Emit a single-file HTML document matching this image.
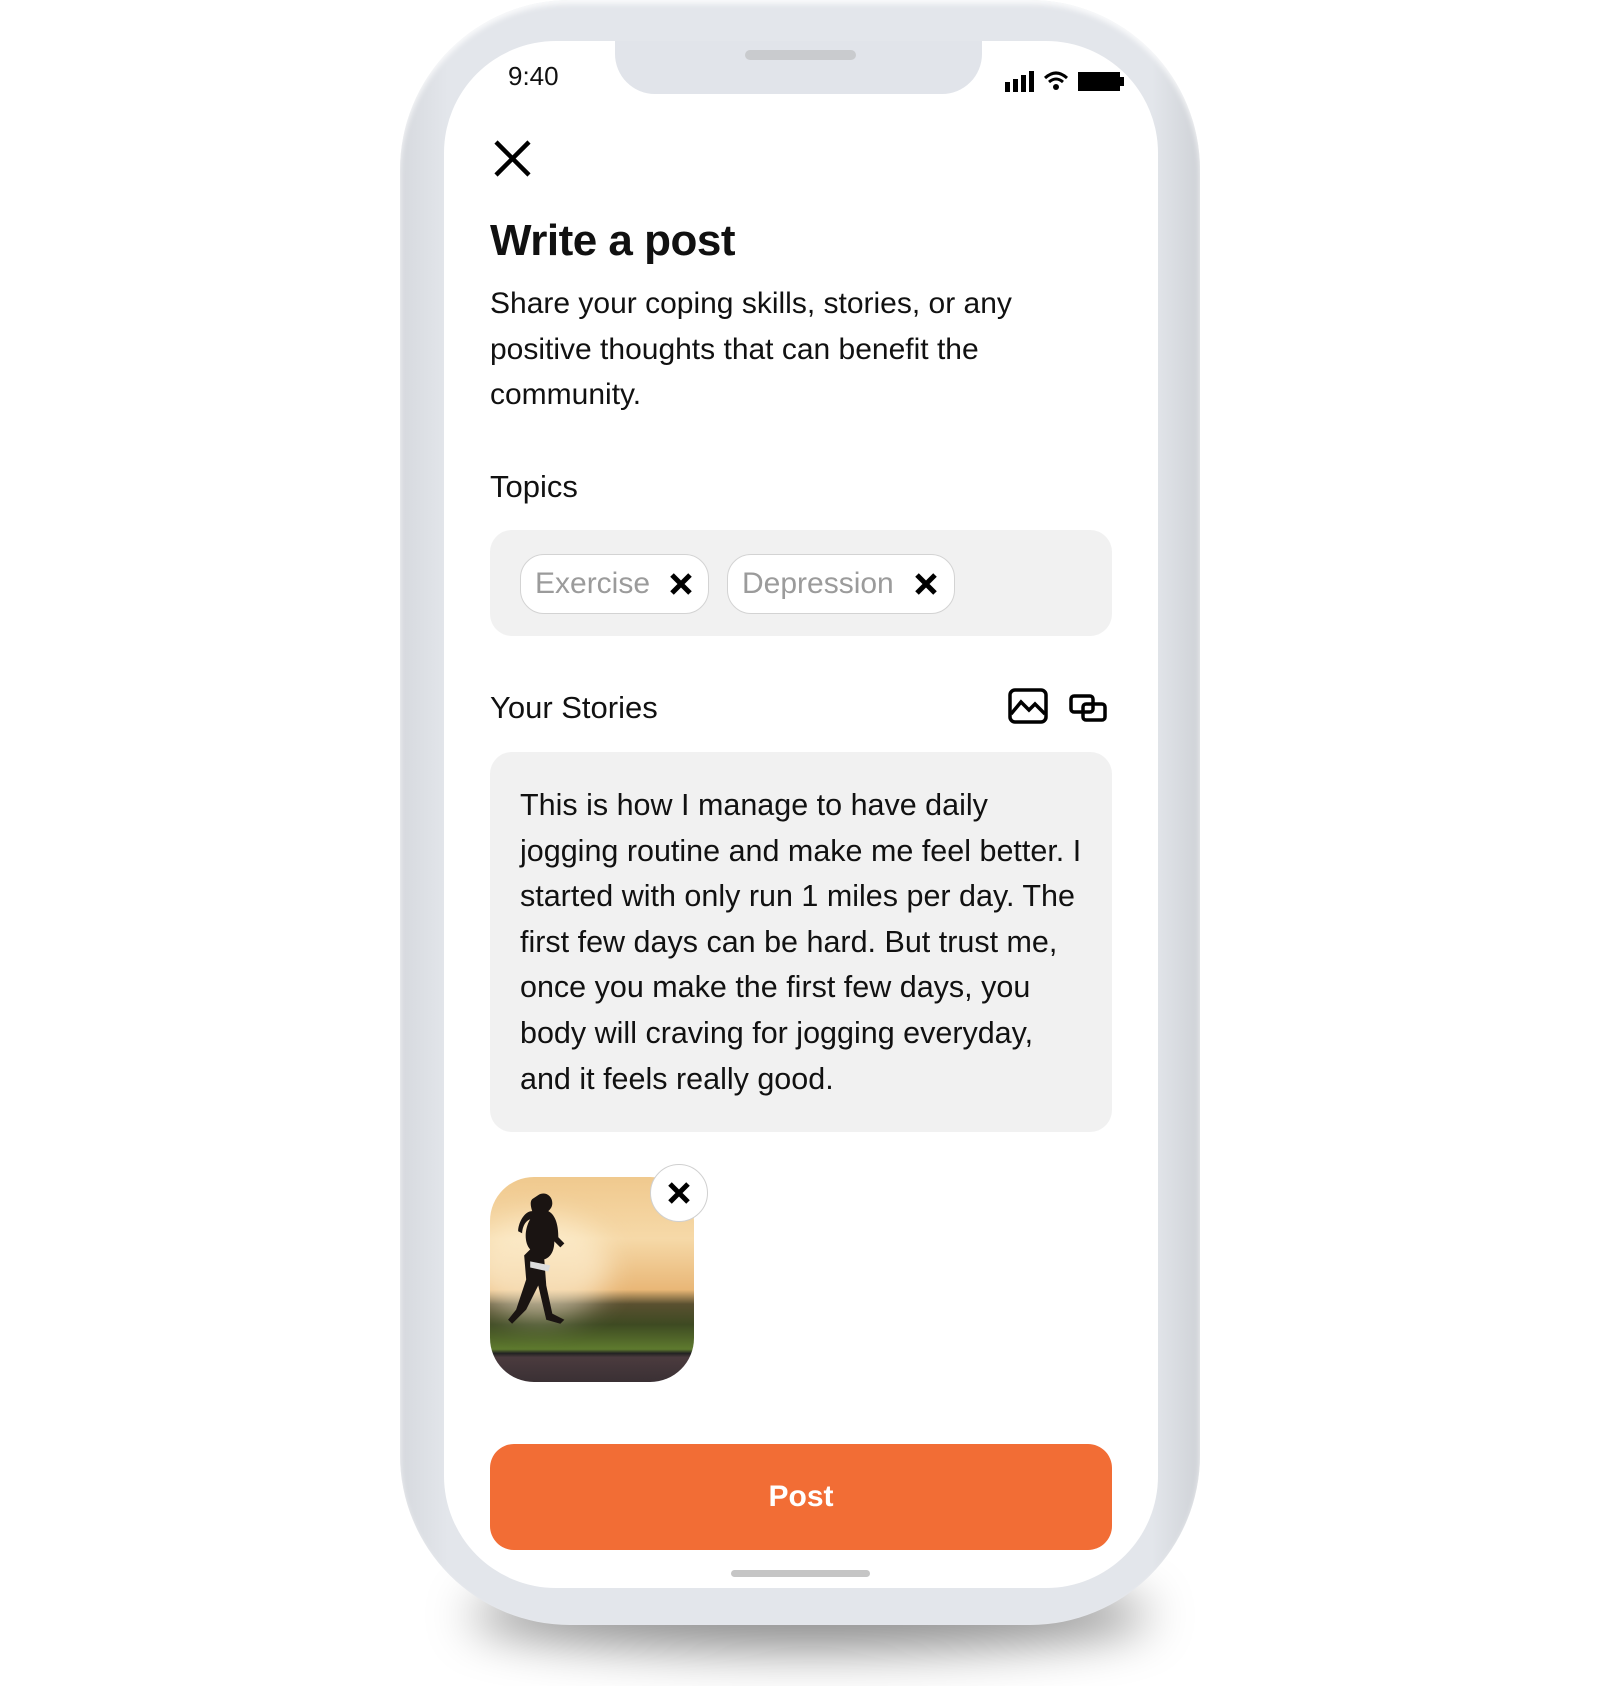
<!DOCTYPE html>
<html><head><meta charset="utf-8"><style>
*{margin:0;padding:0;box-sizing:border-box}
body{width:1600px;height:1686px;background:#fff;position:relative;overflow:hidden;font-family:"Liberation Sans",sans-serif;color:#111}
.shadow{position:absolute;left:470px;top:1580px;width:680px;height:70px;border-radius:50%;background:rgba(0,0,0,.45);filter:blur(24px)}
.phone{position:absolute;left:400px;top:0;width:800px;height:1625px;border-radius:170px;background:linear-gradient(90deg,#d6d9de,#e3e6eb 6%,#e3e6eb 94%,#cfd2d7);box-shadow:inset 0 4px 6px rgba(255,255,255,.8)}
.screen{position:absolute;left:444px;top:41px;width:714px;height:1547px;border-radius:112px;background:#fff;overflow:hidden}
.notch{position:absolute;left:171px;top:-2px;width:367px;height:55px;background:#e1e4ea;border-radius:0 0 40px 40px}
.spk{position:absolute;left:130px;top:11px;width:111px;height:10px;border-radius:5px;background:#c9cbce}
.abs{position:absolute}
.t{position:absolute;left:46px;white-space:nowrap}
.chip{position:absolute;top:24px;height:60px;border-radius:24px;background:#fff;border:1.5px solid #d3d3d3;font-size:30px;color:#9b9b9b;line-height:57px;padding-left:14px}
</style></head><body>
<div class="shadow"></div>
<div class="phone"></div>
<div class="screen">
 <div class="notch"><div class="spk"></div></div>
 <div class="t" style="left:64px;top:20px;font-size:26px">9:40</div>
 <svg class="abs" style="left:561px;top:27px" width="122" height="26" viewBox="0 0 122 26">
  <rect x="0" y="14" width="5" height="10" fill="#000"/><rect x="8" y="11" width="5" height="13" fill="#000"/><rect x="16" y="7" width="5" height="17" fill="#000"/><rect x="24" y="3" width="5" height="21" fill="#000"/>
  <path d="M40 10 Q51 0 62 10" stroke="#000" stroke-width="3" fill="none"/><path d="M44 14 Q51 8 58 14" stroke="#000" stroke-width="3" fill="none"/><circle cx="51" cy="19" r="3" fill="#000"/>
  <rect x="73" y="4" width="42" height="19" fill="#000"/><rect x="115" y="9" width="4" height="9" fill="#000"/>
 </svg>
 <svg class="abs" style="left:50px;top:99px" width="37" height="37" viewBox="0 0 37 37"><path d="M2 2L35 35M35 2L2 35" stroke="#000" stroke-width="4.5"/></svg>
 <div class="t" style="top:175px;font-size:44px;font-weight:bold;letter-spacing:-0.5px">Write a post</div>
 <div class="t" style="top:240px;font-size:30px;line-height:45.7px;white-space:normal;width:580px">Share your coping skills, stories, or any positive thoughts that can benefit the community.</div>
 <div class="t" style="top:428px;font-size:31px">Topics</div>
 <div class="abs" style="left:46px;top:489px;width:622px;height:106px;border-radius:22px;background:#f1f1f1">
  <div class="chip" style="left:30px;width:189px">Exercise
   <svg class="abs" style="left:148px;top:17px" width="24" height="24"><path d="M3 3L21 21M21 3L3 21" stroke="#000" stroke-width="5"/></svg></div>
  <div class="chip" style="left:237px;width:228px">Depression
   <svg class="abs" style="left:186px;top:17px" width="24" height="24"><path d="M3 3L21 21M21 3L3 21" stroke="#000" stroke-width="5"/></svg></div>
 </div>
 <div class="t" style="top:649px;font-size:31px">Your Stories</div>
 <svg class="abs" style="left:564px;top:647px" width="40" height="36" viewBox="0 0 40 36"><rect x="2" y="2" width="36" height="32" rx="5" fill="none" stroke="#000" stroke-width="3.5"/><path d="M3 26L13 14L21 22L27 16L37 26" fill="none" stroke="#000" stroke-width="3.5"/></svg>
 <svg class="abs" style="left:625px;top:653px" width="40" height="28" viewBox="0 0 40 28"><rect x="2" y="2" width="22" height="16" rx="3" fill="none" stroke="#000" stroke-width="3.5"/><rect x="14" y="10" width="22" height="16" rx="3" fill="none" stroke="#000" stroke-width="3.5"/></svg>
 <div class="abs" style="left:46px;top:711px;width:622px;height:380px;border-radius:22px;background:#f1f1f1"></div>
 <div class="t" style="left:76px;top:742px;font-size:30.5px;line-height:45.6px;white-space:nowrap">This is how I manage to have daily<br>jogging routine and make me feel better. I<br>started with only run 1 miles per day. The<br>first few days can be hard. But trust me,<br>once you make the first few days, you<br>body will craving for jogging everyday,<br>and it feels really good.</div>
 <div class="abs" style="left:46px;top:1136px;width:204px;height:205px;border-radius:44px;overflow:hidden;background:linear-gradient(180deg,#f0c98e 0%,#f6d9a8 30%,#e9b777 55%,#5a5030 62%,#3e4a22 72%,#5e7a2e 84%,#222 86%,#4b3b3e 88%,#3a3034 100%)">
  <div class="abs" style="left:-20px;top:40px;width:140px;height:100px;border-radius:50%;background:rgba(255,245,220,.6);filter:blur(14px)"></div>
  <svg class="abs" style="left:0;top:0" width="204" height="205" viewBox="0 0 203 204"><path d="M48 18c6-4 14 0 14 8c0 4-2 6-4 8c8 4 10 16 10 26l6 6l-4 4l-6-6c0 10-4 16-10 18l2 26l6 28l12 6l-4 4l-14-4l-8-34l-12 24l-14 14l-4-4l8-10l10-30l-2-24l6-6c-6-6-6-20 0-30c-6 2-8 10-8 14l-4-2c0-8 6-20 14-20c-2-6-2-10 0-12z" fill="#1a1412"/><path d="M40 84l20 4l-2 6l-18-4z" fill="#ddd"/></svg>
 </div>
 <div class="abs" style="left:206px;top:1123px;width:58px;height:58px;border-radius:50%;background:#fff;border:1.5px solid #d0d0d0"><svg class="abs" style="left:16px;top:16px" width="24" height="24"><path d="M3 3L21 21M21 3L3 21" stroke="#000" stroke-width="5"/></svg></div>
 <div class="abs" style="left:46px;top:1403px;width:622px;height:106px;border-radius:24px;background:#f26d35;color:#fff;font-size:30px;font-weight:bold;text-align:center;line-height:106px">Post</div>
 <div class="abs" style="left:287px;top:1529px;width:139px;height:7px;border-radius:4px;background:#c5c5c5"></div>
</div>
</body></html>
